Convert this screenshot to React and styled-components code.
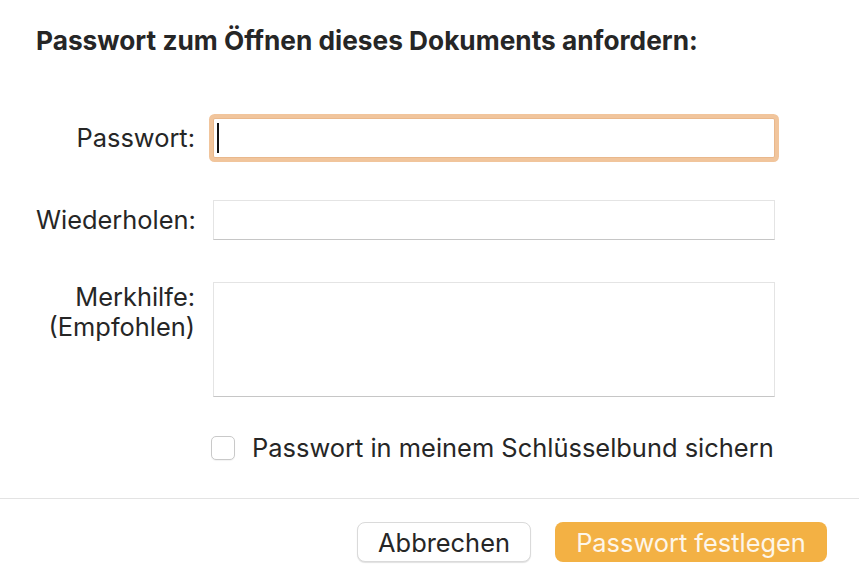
import React from 'react'
import styled, { createGlobalStyle } from 'styled-components'

const GlobalStyle = createGlobalStyle`
    html, body {
        margin: 0;
        padding: 0;
        background: #ffffff;
    }
    body {
        font-family: Inter, "Noto Sans", "Liberation Sans", sans-serif;
        color: #262626;
    }
`

const Dialog = styled.div`
    width: 859px;
    height: 588px;
    display: flex;
    flex-direction: column;
    background: #ffffff;
    overflow: hidden;
`
const Body = styled.div`
    padding: 26px 0 0 36px;
    height: 499px;
    box-sizing: border-box;
    border-bottom: 1px solid #e3e3e3;
`
const Title = styled.div`
    font-size: 26.25px;
    font-weight: 700;
    line-height: 30px;
    color: #262626;
`
const Form = styled.div`
    margin-top: 62px;
    display: grid;
    grid-template-columns: 159px 562px;
    column-gap: 18px;
    row-gap: 42px;
`
const Label = styled.div`
    text-align: right;
    font-size: 25.4px;
    line-height: ${p => (p.$multi ? '30px' : '40px')};
    align-self: start;
    color: #262626;
    white-space: nowrap;
`
const Field = styled.div`
    height: ${p => p.$height || 40}px;
    box-sizing: border-box;
    background: #ffffff;
    border: 1px solid #e4e4e4;
    border-bottom-color: #c6c6c6;
    display: flex;
    align-items: center;
    padding-left: 3px;
    ${p => p.$focused && `
        border-color: #e9b88c;
        box-shadow: 0 0 0 4px #f1c59c;
        border-radius: 2px;
    `}
`
const Caret = styled.span`
    width: 2px;
    height: 30px;
    background: #111111;
`
const CheckRow = styled.label`
    grid-column: 2;
    margin-top: -6px;
    margin-left: -2px;
    display: flex;
    align-items: center;
    gap: 17px;
    font-size: 25.45px;
    line-height: 30px;
    color: #262626;
    white-space: nowrap;
`
const Box = styled.span`
    flex: none;
    width: 24px;
    height: 24px;
    box-sizing: border-box;
    border: 1px solid #c9c9c9;
    border-radius: 5px;
    background: #ffffff;
    box-shadow: 0 1px 1px rgba(0,0,0,0.05);
`
const Footer = styled.div`
    display: flex;
    justify-content: flex-end;
    gap: 24px;
    padding: 23px 32px 0 0;
`
const Button = styled.button`
    height: 40px;
    width: ${p => p.$width}px;
    box-sizing: border-box;
    font-family: inherit;
    font-size: 25.4px;
    border-radius: 8px;
    padding: 0;
    cursor: default;
    border: ${p => (p.$primary ? 'none' : '1px solid #dadada')};
    background: ${p => (p.$primary ? '#f3b144' : '#ffffff')};
    color: ${p => (p.$primary ? '#fdf6ea' : '#262626')};
    box-shadow: ${p => (p.$primary ? 'none' : '0 1px 1px rgba(0,0,0,0.12)')};
`

const App = () => {
    return (
        <Dialog>
            <GlobalStyle />
            <Body>
                <Title>Passwort zum Öffnen dieses Dokuments anfordern:</Title>
                <Form>
                    <Label>Passwort:</Label>
                    <Field $focused>
                        <Caret />
                    </Field>

                    <Label>Wiederholen:</Label>
                    <Field />

                    <Label $multi>Merkhilfe:<br />(Empfohlen)</Label>
                    <Field $height={115} />

                    <CheckRow>
                        <Box />
                        Passwort in meinem Schlüsselbund sichern
                    </CheckRow>
                </Form>
            </Body>
            <Footer>
                <Button $width={174}>Abbrechen</Button>
                <Button $primary $width={272}>Passwort festlegen</Button>
            </Footer>
        </Dialog>
    )
}

export default App
